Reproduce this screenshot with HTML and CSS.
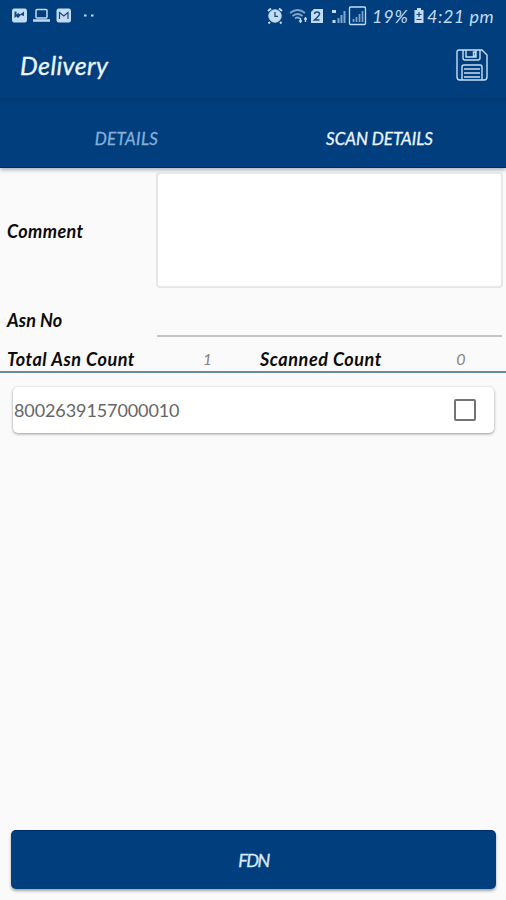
FILE: index.html
```html
<!DOCTYPE html>
<html lang="en">
<head>
<meta charset="utf-8">
<title>Delivery</title>
<link rel="stylesheet" href="styles.css">
</head>
<body>
<header class="top">
  <div class="status">
    <svg class="status-left" width="100" height="20" viewBox="0 0 100 20" fill="none" stroke="#c3dcf5">
      <rect x="12.500" y="4" width="14" height="13" rx="1.500" fill="#c3dcf5"/>
      <path d="M14.500 13V6.500h2v3l2-1.500 1.500 1.500 4-3v4.500l-3-1-3 3-1.500-1.500z" fill="#18477e" stroke="none"/>
      <rect x="36" y="4.500" width="11" height="8.500" rx="1" stroke-width="1.500"/>
      <path d="M33 15.500h17" stroke-width="2.500"/>
      <rect x="57" y="4" width="13.500" height="13" rx="1.500" fill="#c3dcf5"/>
      <path d="M59.500 14V7.500l4.300 3.500L68 7.500V14" stroke="#18477e" stroke-width="1.200"/>
      <path d="M84 10.500h2.500M91 10.500h2.500" stroke-width="2"/>
    </svg>
    <div class="status-right">
      <svg width="112" height="22" viewBox="256 5 112 22" fill="none" stroke="#c3dcf5">
        <circle cx="275" cy="16" r="6.200" fill="#c3dcf5"/>
        <path d="M268 11l3-2.500M282 11l-3-2.500M270 22l-1.500 1.500M280 22l1.500 1.500" stroke-width="2"/>
        <path d="M275 12v4.300h3" stroke="#18477e" stroke-width="1.300"/>
        <path d="M290 13q7.500-6 15 0M292.500 16q5-4 10 0M295 18.500q2.500-2 5 0" stroke="#7fa5cc" stroke-width="1.700"/>
        <path d="M300.500 18v5M305.500 17v5M299 21h3M304 19h3" stroke-width="1.400"/>
        <path d="M314 9h9v14h-12V12z" fill="#c3dcf5" stroke="none"/>
        <path d="M314.500 14q0-2 2.500-2t2.500 2q0 1.500-5 6h5" stroke="#18477e" stroke-width="1.500"/>
        <path d="M332 11.500h4M332.500 21.500h3" stroke-width="3"/>
        <path d="M338.500 23v-5M341.500 23v-8M344.500 23V11" stroke="#7fa5cc" stroke-width="2"/>
        <rect x="349.500" y="7" width="16" height="17.500" rx="1" stroke-width="1.300"/>
        <path d="M353.500 22v-3M356.500 22v-5M359.500 22v-8M362.500 22V11" stroke="#7fa5cc" stroke-width="1.700"/>
      </svg>
      <span class="percent">19%</span>
      <svg class="battery" width="12" height="18" viewBox="0 0 12 18">
        <path d="M4 1h4v2h2.500v13h-9V3H4z" fill="#c3dcf5"/>
        <path d="M6 5v5M3.500 7.500h5M3.500 12.500h5" stroke="#18477e" stroke-width="1.200"/>
      </svg>
      <span class="clock">4:21 pm</span>
    </div>
  </div>
  <div class="appbar">
    <h1 class="title">Delivery</h1>
    <svg class="save" width="32" height="32" viewBox="0 0 32 32" fill="none" stroke="#c8def2" stroke-width="1.400">
      <path d="M3 1h23l5 5v22q0 3-3 3H4q-3 0-3-3V3q0-2 2-2z"/>
      <path d="M7 1v8q0 2 2 2h13q2 0 2-2V1M10 1v7h10V1M17.500 3v4h2V3z"/>
      <path d="M6 31V18q0-2 2-2h16q2 0 2 2v13M8 20h16M8 24h16M8 28h16" />
    </svg>
  </div>
  <nav class="tabs">
    <span class="tab tab-details">DETAILS</span>
    <span class="tab tab-scan">SCAN DETAILS</span>
  </nav>
</header>
<main class="content">
  <div class="row comment-row">
    <span class="label label-comment">Comment</span>
    <div class="comment-box"></div>
  </div>
  <div class="row asn-row">
    <span class="label label-asn">Asn No</span>
    <div class="asn-input"></div>
  </div>
  <div class="counts">
    <span class="label label-total">Total Asn Count</span>
    <span class="count count-total">1</span>
    <span class="label label-scanned">Scanned Count</span>
    <span class="count">0</span>
  </div>
  <div class="item">
    <span class="code">8002639157000010</span>
    <span class="checkbox"></span>
  </div>
</main>
<footer class="footer"><div class="button"><span class="fdn">FDN</span></div></footer>
</body>
</html>
```

FILE: styles.css
```css
* { box-sizing: border-box; }
body {
  margin: 0;
  height: 900px;
  display: flex;
  flex-direction: column;
  overflow: hidden;
  background: #fafafa;
  color: #0b0b0b;
  font-family: Lato, "Liberation Sans", sans-serif;
  font-style: italic;
}
.top {
  height: 168px;
  flex: none;
  background: #003e7e;
  border-bottom: 1px solid #002465;
  box-shadow: 0 2px 4px rgba(0, 45, 95, .35);
}
.status {
  height: 32px;
  display: flex;
  justify-content: space-between;
  padding-right: 11px;
  color: #c3dcf5;
}
.status-left { margin-top: 5px; }
.status-right { display: flex; align-items: center; font-size: 18px; white-space: nowrap; }
.percent { width: 37px; margin-left: 4px; letter-spacing: .8px; }
.battery { margin: 0 2px 0 4px; }
.clock { width: 68px; letter-spacing: .5px; }
.appbar {
  height: 66px;
  padding: 0 18px 0 20px;
  display: flex;
  align-items: center;
  justify-content: space-between;
}
.title { margin: 0; padding-bottom: 1px; font-size: 25px; font-weight: 400; color: #edf6ff; letter-spacing: .4px; -webkit-text-stroke: .3px; }
.tabs {
  height: 69px;
  display: grid;
  grid-template-columns: 1fr 1fr;
  align-items: center;
  text-align: center;
  padding-top: 12px;
  background: linear-gradient(#003873, #003e7e 5px);
  font-size: 17px;
  -webkit-text-stroke: .3px;
}
.tab-details { color: #85afd9; letter-spacing: .3px; }
.tab-scan { color: #edf6ff; letter-spacing: -.05px; }
.row { display: grid; grid-template-columns: 149px 1fr; padding-left: 7px; }
.label { font-size: 18px; font-weight: 700; white-space: nowrap; }
.comment-row { height: 125px; padding-top: 4px; padding-right: 3px; align-items: start; }
.label-comment { align-self: center; padding-bottom: 4px; letter-spacing: .4px; }
.comment-box { height: 116px; background: #fff; border: 2px solid #e7e7e7; border-radius: 4px; }
.asn-row { height: 53px; align-items: center; padding-right: 4px; }
.asn-input { height: 20px; align-self: end; margin: 0 0 9px 1px; border-bottom: 2px solid #c5c5c5; }
.label-asn { letter-spacing: .1px; }
.label-total, .label-scanned { letter-spacing: .55px; }
.counts {
  height: 27px;
  display: grid;
  grid-template-columns: 153px 100px 157px 1fr;
  align-items: center;
  padding-left: 7px;
  border-bottom: 2px solid #6689a5;
}
.count { width: 88px; text-align: center; color: #858585; font-size: 16px; }
.count-total { width: 95px; }
.item {
  height: 46px;
  margin: 14px 12px 0 13px;
  padding: 0 18px 0 1px;
  display: flex;
  align-items: center;
  justify-content: space-between;
  border-radius: 5px;
  background: #fff;
  box-shadow: 0 1px 3px rgba(0, 0, 0, .4);
}
.code { font-size: 18px; color: #666; font-style: normal; letter-spacing: -.1px; }
.checkbox { width: 22px; height: 22px; margin-bottom: 1px; border: 2px solid #737373; border-radius: 2px; }
.footer { margin-top: auto; padding: 0 10px 11px 11px; }
.button {
  height: 59px;
  display: flex;
  align-items: center;
  justify-content: center;
  color: #d9eafa;
  font-size: 18px;
  background: #003e7e;
  border-top: 1px solid #002b6b;
  border-radius: 5px;
  box-shadow: 0 2px 3px rgba(0, 0, 0, .35);
}
.fdn { letter-spacing: -1.5px; -webkit-text-stroke: .3px; }
```
